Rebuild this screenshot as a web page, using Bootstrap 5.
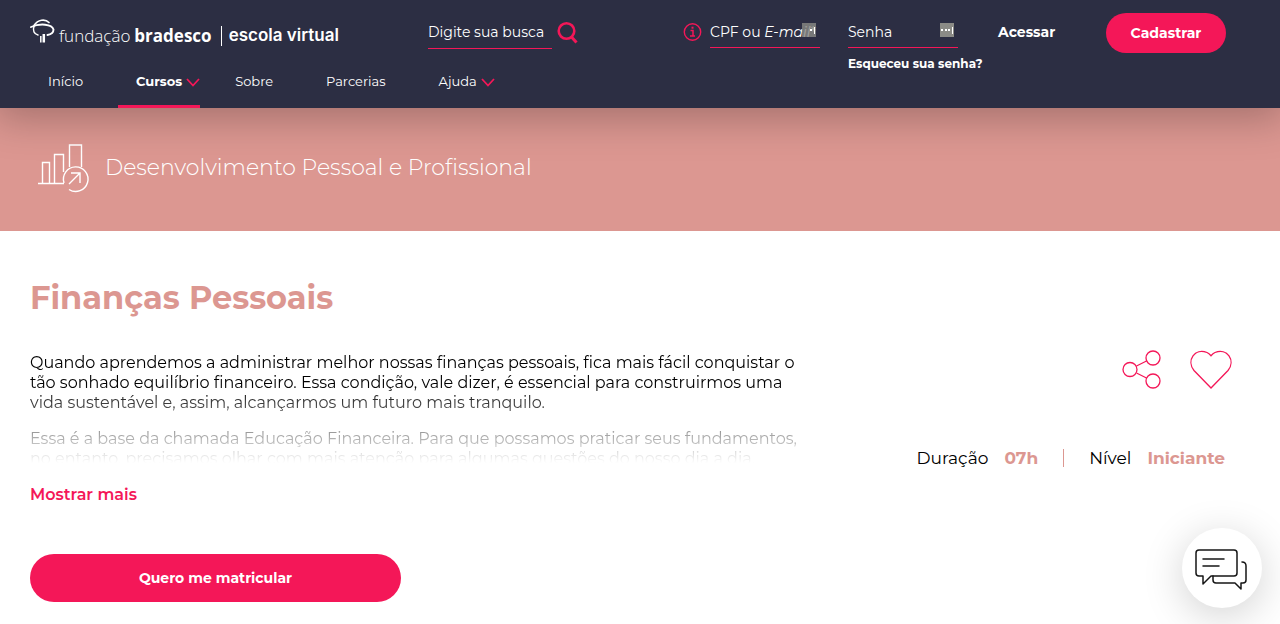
<!DOCTYPE html>
<html lang="pt-br">
<head>
<meta charset="utf-8">
<meta name="viewport" content="width=device-width, initial-scale=1">
<title>Finanças Pessoais | Escola Virtual</title>
<link href="https://cdn.jsdelivr.net/npm/bootstrap@5.3.0/dist/css/bootstrap.min.css" rel="stylesheet">
<style>
:root { --navy: #2c2e43; --pink: #f41758; --rose: #dc9791; }
body { font-family: Montserrat, Inter, "Open Sans", sans-serif; color: #000; overflow-x: hidden; }
svg { display: block; flex: none; overflow: visible; }
.page-pad { padding-left: 30px; padding-right: 30px; }
.site-header { background: var(--navy); box-shadow: 0 5px 40px 5px rgba(0,0,0,.26); z-index: 2; }
.top-row { height: 71px; padding-right: 24px; }
.brand { height: 64px; width: 312px; font-family: "Open Sans", sans-serif; font-size: 17px; padding-top: 7px; }
.brand-light { font-weight: 300; }
.brand-school { font-family: Inter, sans-serif; font-size: 17px; font-weight: 600; }
.brand-bar { width: 1px; height: 20px; background: #fff; margin: 0 7px 0 9px; }
.search { margin-left: 86px; padding-top: 15px; }
.line-input { background: none; border: 0; border-bottom: 1px solid var(--pink); border-radius: 0; color: #fff; font-size: 14px; height: 34px; padding: 0; outline: 0; width: 110px; }
.line-input::placeholder { color: #fff; opacity: 1; }
.search .line-input { width: 124px; appearance: none; }
.search .line-input::-webkit-search-decoration, .search .line-input::-webkit-search-cancel-button { display: none; }
.login { padding-top: 13px; }
.login .line-input { height: 35px; }
.field-label { position: absolute; left: 0; top: 9px; font-size: 14px; line-height: 20px; color: #fff; white-space: nowrap; pointer-events: none; }
.key-mark { position: absolute; right: 4px; top: 10px; }
.forgot { position: absolute; left: 0; top: 42px; font-size: 12px; line-height: 18px; white-space: nowrap; }
.enter { font-size: 14px; line-height: 20px; margin: 9px 0 0 40px; width: 57px; }
.btn-pink { --bs-btn-color: #fff; --bs-btn-bg: var(--pink); --bs-btn-border-width: 0; --bs-btn-hover-color: #fff; --bs-btn-hover-bg: #d80f49; --bs-btn-active-bg: #c50b41; --bs-btn-font-weight: 700; --bs-btn-font-size: 14px; }
.join { width: 120px; height: 40px; margin-left: 51px; }
.menu { gap: 17px; }
.menu a { display: flex; align-items: center; gap: 4px; height: 37px; padding: 0 18px 17px; font-size: 13px; line-height: 20px; color: #fff; text-decoration: none; }
.menu .has-sub { padding-right: 0; }
.menu .current { border-bottom: 3px solid var(--pink); padding-bottom: 14px; font-weight: 700; }
.banner { background: var(--rose); height: 123px; padding: 0 30px 3px 38px; gap: 17px; }
.banner-name { font-size: 22px; font-weight: 300; line-height: 28px; color: #fff; }
.course-title { color: var(--rose); font-size: 32px; font-weight: 700; line-height: 40px; margin: 47px 0 33px; }
.col-about { max-width: 780px; }
.about { font-size: 16px; font-weight: 400; line-height: 20px; height: 112px; padding-top: 2px; overflow: hidden; -webkit-mask-image: linear-gradient(#000 30%, transparent); mask-image: linear-gradient(#000 30%, transparent); }
.more { font-size: 16px; font-weight: 600; line-height: 20px; color: var(--pink); margin-top: 22px; }
.enroll { width: 371px; height: 48px; margin: 49px 0 22px; }
.icon-row { gap: 28px; padding-right: 18px; }
.facts { font-size: 17px; font-weight: 400; line-height: 20px; margin: 59px 25px 0 0; }
.facts strong { color: var(--rose); font-weight: 700; margin-left: 16px; }
.facts-bar { width: 1px; height: 18px; background: var(--rose); margin: 0 25px; }
.chat { position: fixed; right: 18px; bottom: 16px; width: 80px; height: 80px; background: #fff; border: 0; box-shadow: 0 8px 40px rgba(0,0,0,.18); }
.chat svg { margin: 4px 3px 0 0; }
</style>
</head>
<body>
<header class="site-header position-relative page-pad text-white">
  <div class="top-row d-flex align-items-start">
    <a class="brand d-flex align-items-center text-white text-decoration-none text-nowrap" href="#">
      <svg class="mb-2" width="25" height="26" viewBox="0 0 25 26" fill="none" stroke="#fff" stroke-linecap="round"><path d="M4 6.500C8 .500 15-.500 19 3.500" stroke-width="1.700"/><path d="M1 8C10 4 22 5 23.500 10.500c0 3-3 5-6 5.500" stroke-width="1.900"/><path d="M4 7.500c-1.500 4 0 7.500 4 8.500" stroke-width="1.400"/><path d="M10.800 17v6.500" stroke-width="1.500" stroke-linecap="butt"/><path d="M13.800 15v8.500" stroke-width="2.500" stroke-linecap="butt"/></svg>
      <span class="brand-light ms-1">fundação</span><strong class="ms-1">bradesco</strong>
      <span class="brand-bar"></span><span class="brand-school">escola virtual</span>
    </a>
    <form class="search d-flex" role="search">
      <input class="line-input" type="search" placeholder="Digite sua busca" aria-label="Digite sua busca">
      <button class="btn p-0 border-0 ms-1" type="button" aria-label="Buscar"><svg width="22" height="24" viewBox="0 0 22 24" fill="none" stroke="#f41758" stroke-width="2.600"><circle cx="10.500" cy="11" r="7.800"/><path d="M15.500 17l5 5.500" stroke-width="3"/></svg></button>
    </form>
    <form class="login d-flex align-items-start ms-auto">
      <svg class="me-2 mt-2" width="19" height="22" viewBox="0 0 19 22" fill="none" stroke="#f41758"><circle cx="9.500" cy="11" r="8.200" stroke-width="1.400"/><path d="M7.500 9.500H10V15M7 15h5" stroke-width="1.500"/><path d="M8.500 6.700h2" stroke-width="2"/></svg>
      <div class="position-relative">
        <input class="line-input" id="cpf" type="text"><label class="field-label" for="cpf">CPF ou <em>E-mail</em>*</label>
        <svg class="key-mark" width="14" height="14" viewBox="0 0 14 14"><path fill="#8b8b86" fill-opacity=".8" d="M0 0h14v14H0z"/><path fill="#fff" d="M8 6h2v2H8zM12 4h1v7h-1z"/></svg>
      </div>
      <div class="position-relative ms-4 ps-1">
        <div class="position-relative">
          <input class="line-input" id="senha" type="password"><label class="field-label" for="senha">Senha</label>
          <svg class="key-mark" width="14" height="14" viewBox="0 0 14 14"><path fill="#8b8b86" d="M0 0h14v14H0z"/><path fill="#fff" d="M1 6h2v2H1zM5 6h2v2H5zM8 6h2v2H8zM12 4h1v7h-1z"/></svg>
          <a class="forgot text-white fw-bold text-decoration-none" href="#">Esqueceu sua senha?</a>
        </div>
      </div>
      <button class="enter btn p-0 border-0 text-white fw-bold" type="button">Acessar</button>
      <button class="join btn btn-pink rounded-pill" type="button">Cadastrar</button>
    </form>
  </div>
  <nav aria-label="Principal">
    <ul class="menu d-flex list-unstyled m-0">
      <li><a href="#">Início</a></li>
      <li><a class="has-sub current" href="#" aria-current="page">Cursos <svg width="14" height="12" viewBox="0 0 14 12" fill="none" stroke="#f41758" stroke-width="1.800"><path d="M1 4l6 6.500L13 4"/></svg></a></li>
      <li><a href="#">Sobre</a></li>
      <li><a href="#">Parcerias</a></li>
      <li><a class="has-sub" href="#">Ajuda <svg width="14" height="12" viewBox="0 0 14 12" fill="none" stroke="#f41758" stroke-width="1.800"><path d="M1 4l6 6.500L13 4"/></svg></a></li>
    </ul>
  </nav>
</header>
<section class="banner d-flex align-items-center">
  <svg width="50" height="48" viewBox="0 0 50 48" fill="none" stroke="#fff" stroke-width="1.400"><path d="M0 39.500h26M4.500 39V18.500h7V39M16.500 39V10.500h9V28M31.500 23V1h12v22"/><path d="M31 45.500A12.300 12.300 0 1 0 26 39"/><path d="M31 40l11-11M33 29h9v10"/></svg>
  <span class="banner-name">Desenvolvimento Pessoal e Profissional</span>
</section>
<main class="page-pad">
  <h1 class="course-title">Finanças Pessoais</h1>
  <div class="d-flex justify-content-between">
    <section class="col-about">
      <div class="about">
        <p>Quando aprendemos a administrar melhor nossas finanças pessoais, fica mais fácil conquistar o<br>tão sonhado equilíbrio financeiro. Essa condição, vale dizer, é essencial para construirmos uma<br>vida sustentável e, assim, alcançarmos um futuro mais tranquilo.</p>
        <p>Essa é a base da chamada Educação Financeira. Para que possamos praticar seus fundamentos,<br>no entanto, precisamos olhar com mais atenção para algumas questões do nosso dia a dia.</p>
      </div>
      <button class="more btn p-0 border-0" type="button">Mostrar mais</button>
      <div><button class="enroll btn btn-pink rounded-pill" type="button">Quero me matricular</button></div>
    </section>
    <aside class="d-flex flex-column align-items-end">
      <div class="icon-row d-flex">
        <button class="btn p-0 border-0" type="button" aria-label="Compartilhar"><svg width="40" height="38" viewBox="0 0 40 38" fill="none" stroke="#f41758" stroke-width="1.300"><circle cx="8" cy="18.500" r="7"/><circle cx="31" cy="7" r="7"/><circle cx="31" cy="30" r="7"/><path d="M14.500 15l10-5M14.500 22l10 5"/></svg></button>
        <button class="btn p-0 border-0" type="button" aria-label="Favoritar"><svg width="42" height="38" viewBox="0 0 42 38" fill="none" stroke="#f41758" stroke-width="1.300"><path d="M21 37L4 19.500C-4 9.500 5-3.500 17 1.500Q19 2.500 21 4.700Q23 2.500 25 1.500C37-3.500 46 9.500 38 19.500z"/></svg></button>
      </div>
      <div class="facts d-flex align-items-center text-nowrap"><span>Duração<strong>07h</strong></span><span class="facts-bar"></span><span>Nível<strong>Iniciante</strong></span></div>
    </aside>
  </div>
</main>
<button class="chat rounded-circle d-flex align-items-center justify-content-center p-0" type="button" aria-label="Abrir conversa"><svg width="52" height="42" viewBox="0 0 52 42" fill="none" stroke="#161616" stroke-width="1.500" stroke-linejoin="round" stroke-linecap="round"><path d="M4 1h35q3 0 3 3v20q0 3-3 3H16l-8 8v-8H4q-3 0-3-3V4q0-3 3-3z"/><path d="M8 10h21M8 17h16M47 13q4 0 4 4v14q0 3-3 3h-2v6l-6-6H21q-3 0-3-3v-4"/></svg></button>
<script src="https://cdn.jsdelivr.net/npm/bootstrap@5.3.0/dist/js/bootstrap.bundle.min.js"></script>
</body>
</html>
